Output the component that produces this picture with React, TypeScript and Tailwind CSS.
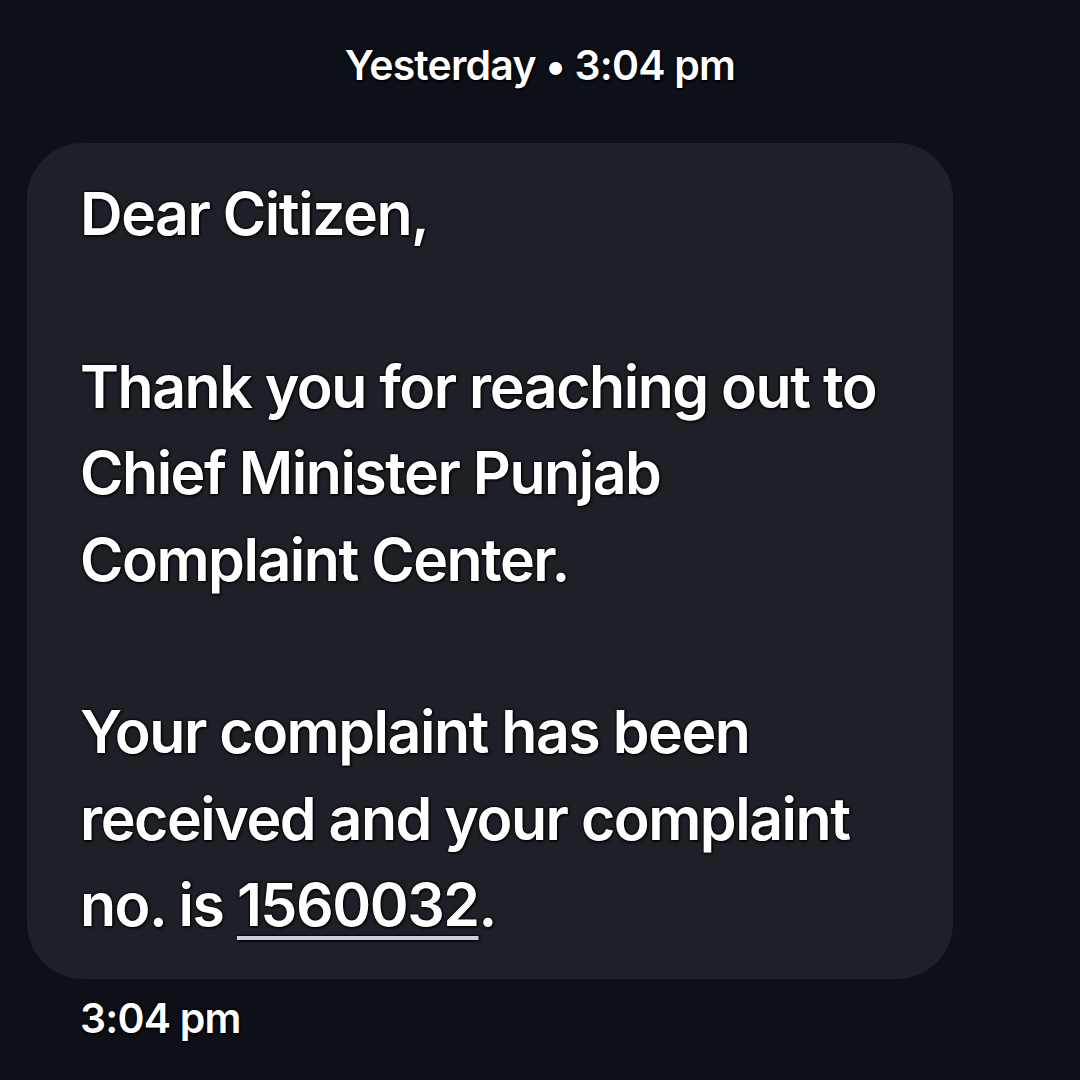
export default function App() {
  const shadow = "[text-shadow:0_0_2px_#000,0_0_3px_#000,1px_1px_3px_#000]";
  return (
    <div className="w-[1080px] h-[1080px] overflow-hidden bg-[#0d1117] font-['Inter',sans-serif] text-white">
      <div className="flex flex-col items-center">
        <div className="-mt-[35px] h-[40px] text-[40px] leading-[40px] font-semibold text-[#3a3f48]">Shared</div>
        <div className={`mt-[35px] text-[41px] leading-[50px] font-semibold tracking-[-0.02em] ${shadow}`}>
          Yesterday • 3:04 pm
        </div>
      </div>
      <div className="ml-[27px] mt-[53px] w-[926px] rounded-[56px] bg-[#1d2027] pl-[53px] pr-[30px] pt-[28px] pb-[30px]">
        <p className={`text-[59px] leading-[86.4px] font-semibold tracking-[-0.025em] ${shadow}`}>
          Dear Citizen,
          <br />
          <br />
          Thank you for reaching out to
          <br />
          Chief Minister Punjab
          <br />
          Complaint Center.
          <br />
          <br />
          Your complaint has been
          <br />
          received and your complaint
          <br />
          no. is{" "}
          <span className="underline decoration-[#c9d1dd] decoration-[4px] underline-offset-[10px]">1560032</span>.
        </p>
      </div>
      <div className={`ml-[80px] mt-[14px] text-[41px] leading-[50px] font-semibold tracking-[-0.02em] ${shadow}`}>
        3:04 pm
      </div>
    </div>
  );
}
